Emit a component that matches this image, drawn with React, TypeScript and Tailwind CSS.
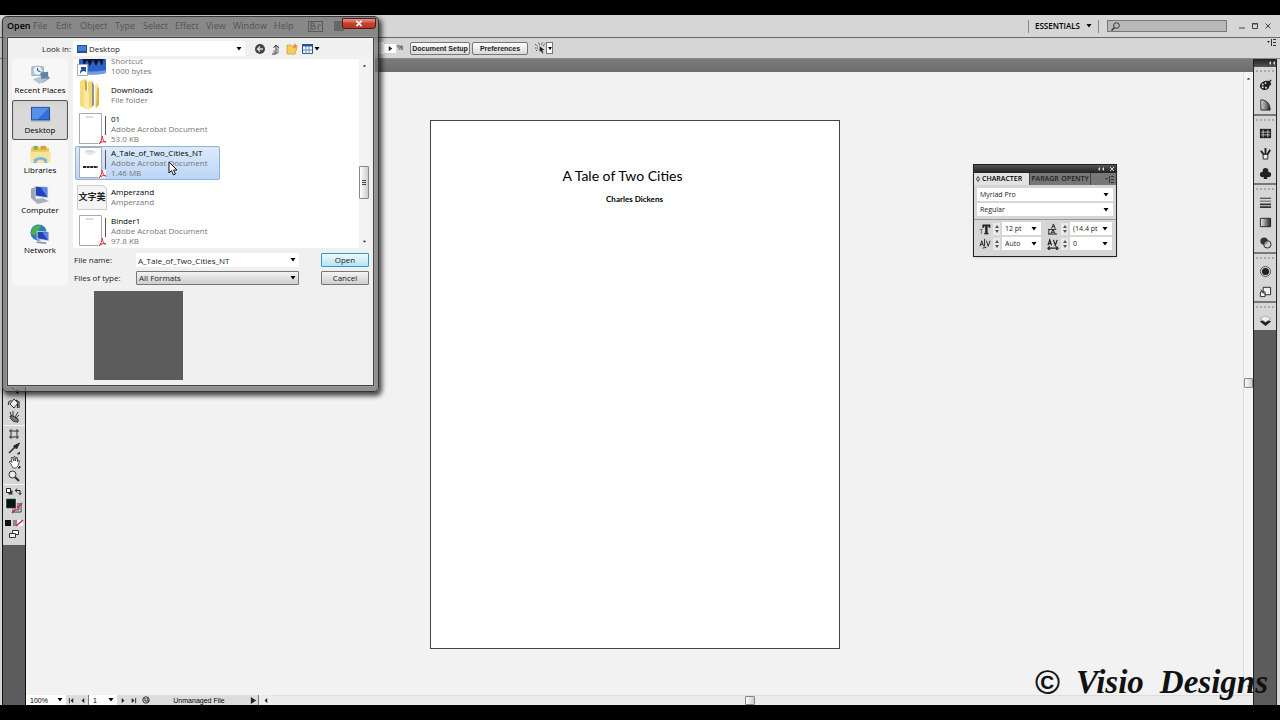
import type { ReactNode } from 'react'
import clsx from 'clsx'

const menus = [
  { label: 'File', width: 'w-[23px]' },
  { label: 'Edit', width: 'w-[24px]' },
  { label: 'Object', width: 'w-[35px]' },
  { label: 'Type', width: 'w-[28px]' },
  { label: 'Select', width: 'w-[32px]' },
  { label: 'Effect', width: 'w-[31px]' },
  { label: 'View', width: 'w-[27px]' },
  { label: 'Window', width: 'w-[41px]' },
  { label: 'Help', width: 'w-[30px]' },
]

/* ---------- small glyphs ---------- */

function Caret({ className }: { className?: string }) {
  return (
    <svg viewBox="0 0 6 4" className={clsx('pointer-events-none h-[4px] w-[6px] shrink-0 fill-black', className)}>
      <path d="M.5 0h5L3 3.500z" />
    </svg>
  )
}

function Arrow({ d, label, className }: { d: string; label: string; className?: string }) {
  return (
    <button type="button" aria-label={label} className={clsx('flex h-[9px] shrink-0 items-center justify-center', className)}>
      <svg viewBox="0 0 8 8" className="h-[7px] w-[7px] fill-[#222]">
        <path d={d} />
      </svg>
    </button>
  )
}

function PanelMenu({ className }: { className?: string }) {
  return (
    <svg viewBox="0 0 9 7" className={clsx('h-[7px] w-[9px]', className)} fill="#333">
      <path d="M0 2h3L1.500 4zM4 0h1v7H4zM6 0h3v1H6zM6 3h3v1H6zM6 6h3v1H6z" />
    </svg>
  )
}

/* ---------- left tools ---------- */

function Tool({ label, children }: { label: string; children: ReactNode }) {
  return (
    <button type="button" aria-label={label} className="flex h-[14px] w-full shrink-0 items-center justify-center">
      <svg viewBox="0 0 14 14" className="h-[14px] w-[14px]" fill="none" stroke="#333" strokeWidth="1">
        {children}
      </svg>
    </button>
  )
}

function Toolbar() {
  return (
    <aside className="flex w-[24px] shrink-0 flex-col border-x border-[#111] bg-[#5c5c5c]">
      <div className="flex flex-col bg-[#d6d6d6] pt-[323px] pb-[3px]">
        <Tool label="Blend">
          <path d="M3 3l4 5M8 9l3 3V8z" fill="#333" />
        </Tool>
        <Tool label="Live Paint Bucket">
          <path d="M3 8l4-5 4 4-4 5z" fill="#eee" />
          <path d="M1.500 9c-.5-3 .5-4 3-4.500M9 4l3 2v6M10.500 8v4" strokeWidth="1.200" />
        </Tool>
        <Tool label="Symbol Sprayer">
          <path d="M3 2l2 5M6 1v6M11 2L8 7M12 5L9 8" />
          <path d="M3 6c1 5 4 6 8 6V9L6 6z" fill="#777" />
        </Tool>
        <div className="my-[1px] h-[1px] bg-[#f5f5f5]" />
        <Tool label="Artboard">
          <path d="M4 2v10M10 2v10M2 4h10M2 10h10" />
        </Tool>
        <Tool label="Eyedropper">
          <path d="M2 12l6-6" strokeWidth="1.600" />
          <path d="M6.500 5l3 3 3-6z" fill="#222" />
          <path d="M12.500 11v2h-2z" fill="#222" />
        </Tool>
        <Tool label="Hand">
          <path d="M4 9L2 7l1-1 2 1.500L4 3l1-1 2 4V1.500h1L8.500 6l1-4 1 1v4l1-2 1 1-1.500 5-2 2H6z" fill="#fff" strokeWidth=".8" />
          <path d="M13 11v2h-2z" fill="#222" />
        </Tool>
        <Tool label="Zoom">
          <circle cx="5.500" cy="5.500" r="3.500" fill="#eee" />
          <path d="M8 8l4 4" strokeWidth="2.200" />
        </Tool>
        <div className="mt-[1px] h-[1px] bg-[#f5f5f5]" />
        <div className="flex h-[12px] items-center justify-between px-[3px]">
          <svg viewBox="0 0 7 7" className="h-[7px] w-[7px]">
            <path d="M2.500 2.500h4v4h-4z" fill="#333" />
            <path d="M.5.5h4v4h-4z" fill="#fff" stroke="#222" />
          </svg>
          <svg viewBox="0 0 7 7" className="h-[7px] w-[7px]" fill="none" stroke="#222">
            <path d="M0 2.500h5v4M2 .5L.5 2.500 2 4.500M3.500 5L5 6.500 6.500 5" />
          </svg>
        </div>
        <svg viewBox="0 0 22 19" className="h-[19px] w-[22px] shrink-0">
          <path d="M10 7h8v8h-8z" fill="#fff" stroke="#333" />
          <path d="M12 9h4v4h-4z" fill="#d6d6d6" stroke="#333" />
          <path d="M9 16L19 6" stroke="#d22040" strokeWidth="1.500" />
          <path d="M3.500 2h9v9h-9z" fill="#111" stroke="#1d5550" />
          <path d="M2.500 1h11v11h-11z" fill="none" stroke="#eee" strokeWidth=".6" />
        </svg>
        <svg viewBox="0 0 22 12" className="h-[12px] w-[22px] shrink-0">
          <path d="M2 4h6v6H2z" fill="#111" />
          <path d="M10 4h4v6h-4z" fill="#888" />
          <path d="M14 4h6v6h-6z" fill="#fff" />
          <path d="M13 10l7-6" stroke="#d22040" strokeWidth="1.500" />
        </svg>
        <Tool label="Screen Mode">
          <path d="M5.500 2.500h6v4h-6z" fill="#fff" />
          <path d="M2.500 5.500h6v4h-6z" fill="#eee" />
        </Tool>
      </div>
    </aside>
  )
}

/* ---------- right dock ---------- */

const dock: { label: string; art: ReactNode }[][] = [
  [
    {
      label: 'Color',
      art: (
        <>
          <path d="M1 9c0-4 4-6 8-6 3 0 4 2 4 4 0 1-2 1-2 2 0 3-3 4-5 4-3 0-5-2-5-4z" fill="#222" />
          <g fill="#eee">
            <circle cx="4" cy="7" r="1" />
            <circle cx="7" cy="5.500" r="1" />
            <circle cx="4" cy="10" r="1" />
            <circle cx="7.500" cy="10.500" r="1" />
          </g>
          <path d="M8 8l5-6" stroke="#222" strokeWidth="1.500" />
        </>
      ),
    },
    {
      label: 'Color Guide',
      art: (
        <>
          <path d="M2 2c6 0 10 4 10 11H2z" fill="url(#fade)" stroke="#222" />
          <path d="M2 13L6 3M2 13l9-6" stroke="#777" strokeWidth=".6" />
        </>
      ),
    },
  ],
  [
    {
      label: 'Swatches',
      art: (
        <>
          <path d="M1 2h12v10H1z" fill="#222" />
          <path d="M4.500 3v8M9.500 3v8M2 5.500h10M2 8.500h10" stroke="#ddd" strokeWidth=".8" />
        </>
      ),
    },
    {
      label: 'Brushes',
      art: (
        <g stroke="#222" fill="#eee">
          <path d="M4.500 8h5v5h-5z" />
          <path d="M5 8L2 4M7 8V1M9 8l3-5" strokeWidth="2" />
        </g>
      ),
    },
    {
      label: 'Symbols',
      art: (
        <g fill="#222">
          <circle cx="7" cy="4" r="3" />
          <circle cx="4" cy="8" r="3" />
          <circle cx="10" cy="8" r="3" />
          <path d="M6 7h2l1 6H5z" />
        </g>
      ),
    },
  ],
  [
    { label: 'Stroke', art: <path d="M1 2h12v1H1zM1 5h12v1H1zM1 8h12v2H1zM1 11h12v2H1z" fill="#333" /> },
    { label: 'Gradient', art: <path d="M1.500 2.500h11v9h-11z" fill="url(#fade)" stroke="#222" /> },
    {
      label: 'Transparency',
      art: (
        <>
          <circle cx="5.500" cy="5.500" r="4" fill="#333" />
          <circle cx="9" cy="9" r="4" fill="#ccc" fillOpacity=".6" stroke="#222" />
        </>
      ),
    },
  ],
  [
    {
      label: 'Appearance',
      art: (
        <>
          <circle cx="7" cy="7" r="5.500" fill="#ccc" stroke="#555" />
          <circle cx="7" cy="7" r="3.800" fill="#222" />
        </>
      ),
    },
    {
      label: 'Graphic Styles',
      art: (
        <>
          <path d="M4.500 2.500h8v8h-8z" fill="#eee" stroke="#222" />
          <path d="M1.500 7.500h5v5h-5z" fill="#fff" stroke="#222" />
          <path d="M2 5l4 5" stroke="#222" />
        </>
      ),
    },
  ],
  [
    {
      label: 'Layers',
      art: (
        <>
          <path d="M1 8l6-3 6 3-6 5z" fill="#222" />
          <path d="M1 5l6-3 6 3-6 4z" fill="#eee" stroke="#777" strokeWidth=".5" />
        </>
      ),
    },
  ],
]

function Dock() {
  return (
    <aside className="flex w-[24px] shrink-0 flex-col border-x border-[#222] bg-[#5c5c5c]">
      <div className="flex h-[8px] shrink-0 items-center justify-end bg-gradient-to-b from-[#222] to-[#555] pr-[1px]">
        <svg viewBox="0 0 6 4" className="h-[4px] w-[6px] fill-[#ddd]">
          <path d="M2 0v4L0 2zM6 0v4L4 2z" />
        </svg>
      </div>
      {dock.map((group, i) => (
        <div key={i} className="shrink-0 border-b-2 border-[#777] bg-[#d6d6d6] last:border-b-0">
          <div className="flex h-[7px] items-center justify-center">
            <span className="w-[18px] border-t-2 border-dotted border-[#aaa]" />
          </div>
          {group.map(({ label, art }) => (
            <button key={label} type="button" aria-label={label} className="flex h-[20px] w-full items-center justify-center">
              <svg viewBox="0 0 14 14" className="h-[13px] w-[13px]" fill="none">
                {art}
              </svg>
            </button>
          ))}
        </div>
      ))}
    </aside>
  )
}

/* ---------- top bars ---------- */

function MenuBar() {
  return (
    <header className="flex h-[23px] shrink-0 items-center border-b border-[#666] bg-[#d6d6d6] pr-[8px] pl-[33px]">
      <nav className="flex font-['Open_Sans','Noto_Sans',sans-serif] text-[9px] leading-[12px] text-black">
        {menus.map(({ label, width }) => (
          <button key={label} type="button" className={clsx('text-left', width)}>
            {label}
          </button>
        ))}
      </nav>
      <div className="ml-[4px] flex h-[11px] w-[15px] items-center justify-center border border-[#222]">
        <svg viewBox="0 0 12 8" className="h-[8px] w-[12px]" fill="none" stroke="#222">
          <path d="M1 0v8M1 1h3v3H1M1 4h4v3H1M8 8V3h3" />
        </svg>
      </div>
      <div className="ml-[11px] h-[10px] w-[10px] bg-[#555]" />
      <div className="ml-auto flex items-center">
        <button
          type="button"
          className="flex h-[13px] items-center gap-[6px] border-x border-[#888] px-[6px] font-['Open_Sans','Noto_Sans',sans-serif] text-[8px] font-semibold text-black"
        >
          ESSENTIALS
          <Caret />
        </button>
        <label className="ml-[8px] flex h-[12px] w-[120px] items-center border border-[#777] bg-[#b8b8b8] px-[3px]">
          <svg viewBox="0 0 9 9" className="h-[9px] w-[9px] shrink-0" fill="none" stroke="#333">
            <circle cx="5.500" cy="3.500" r="2.800" />
            <path d="M3.500 5.500L.5 8.500" strokeWidth="1.400" />
          </svg>
          <input aria-label="Search" className="min-w-0 flex-1 bg-transparent text-[8px] outline-none" />
        </label>
        <div className="ml-[11px] flex gap-[5px]">
          {[
            { name: 'Minimize', d: 'M1 6h6' },
            { name: 'Restore', d: 'M1.500 1.500h5v5h-5zM1 2h6' },
            { name: 'Close', d: 'M1.500 1.500l5 5M6.500 1.500l-5 5' },
          ].map(({ name, d }) => (
            <button key={name} type="button" aria-label={name}>
              <svg viewBox="0 0 8 8" className="h-[8px] w-[8px]" fill="none" stroke="#444">
                <path d={d} />
              </svg>
            </button>
          ))}
        </div>
      </div>
    </header>
  )
}

function ControlBar() {
  const button =
    'h-[13px] rounded-[2px] border border-[#777] bg-gradient-to-b from-white to-[#d8d8d8] text-[7px] font-bold leading-[11px] text-[#222]'
  return (
    <div className="flex h-[21px] shrink-0 items-center border-b border-[#888] bg-[#d6d6d6] pr-[4px] pl-[340px] font-['Liberation_Sans',Arial,sans-serif] text-[7px] text-black">
      <input aria-label="Opacity" defaultValue="100" className="h-[12px] w-[44px] bg-white px-[3px]" />
      <Arrow d="M2 1v6l4-3z" label="Opacity slider" className="w-[12px] bg-white" />
      <span className="ml-[1px] w-[13px]">%</span>
      <button type="button" className={clsx(button, 'w-[60px]')}>
        Document Setup
      </button>
      <button type="button" className={clsx(button, 'ml-[2px] w-[56px]')}>
        Preferences
      </button>
      <svg viewBox="0 0 12 12" className="ml-[7px] h-[12px] w-[11px]" fill="none" stroke="#444">
        <path d="M0 2l3 2M0 6h3M4 0l1 3M8 0L7 3M11 1L9 4M1 9l2-1" strokeDasharray="1.500 .5" />
        <path d="M5 4l5 4-2 .5 1 3-1 .5-1.500-3L5 10z" fill="#222" stroke="none" />
      </svg>
      <button type="button" aria-label="Selection options" className="flex h-[12px] w-[7px] items-center justify-center border border-[#777] bg-white">
        <svg viewBox="0 0 4 3" className="h-[3px] w-[4px]">
          <path d="M0 0h4L2 3z" />
        </svg>
      </button>
      <PanelMenu className="mb-[12px] ml-auto" />
    </div>
  )
}

function StatusBar() {
  return (
    <footer className="flex h-[10px] shrink-0 items-center bg-[#ececec] font-['Liberation_Sans',Arial,sans-serif] text-[7px] leading-[9px] text-black">
      <div className="relative flex h-full w-[40px] shrink-0 items-center bg-white">
        <input aria-label="Zoom" defaultValue="100%" className="h-[9px] w-full pl-[4px]" />
        <Caret className="absolute right-[3px]" />
      </div>
      <div className="flex h-full shrink-0 items-center bg-[#dcdcdc]">
        <Arrow d="M1 1h1v6H1zM6 1v6L3 4z" label="First" className="w-[10px]" />
        <Arrow d="M6 1v6L3 4z" label="Previous" className="w-[12px]" />
      </div>
      <div className="relative flex h-full w-[29px] shrink-0 items-center border-l border-[#777] bg-white">
        <input aria-label="Artboard" defaultValue="1" className="h-[9px] w-full pl-[4px]" />
        <Caret className="absolute right-[3px]" />
      </div>
      <div className="flex h-full w-[142px] shrink-0 items-center border-r border-[#777] bg-[#dcdcdc]">
        <Arrow d="M2 1v6l3-3z" label="Next" className="w-[12px]" />
        <Arrow d="M2 1v6l3-3zM6 1h1v6H6z" label="Last" className="w-[9px]" />
        <svg viewBox="0 0 8 8" className="ml-[4px] h-[8px] w-[8px]" fill="none" stroke="#333">
          <circle cx="4" cy="4" r="3.200" />
          <path d="M3 2v3h3M5 2l2 4" />
        </svg>
        <span className="flex-1 text-center">Unmanaged File</span>
        <Arrow d="M1 0v8l6-4z" label="Status menu" className="w-[10px]" />
      </div>
      <Arrow d="M6 1v6L3 4z" label="Scroll left" className="w-[12px]" />
      <div className="flex h-full flex-1 items-center justify-center border-t border-[#ddd] pr-[24px]">
        <div className="h-[9px] w-[10px] rounded-[1px] border border-[#888] bg-gradient-to-r from-white to-[#ccc]" />
      </div>
    </footer>
  )
}

/* ---------- character panel ---------- */

function PanelSelect({ label, value }: { label: string; value: string }) {
  return (
    <div className="relative flex items-center">
      <select aria-label={label} className="h-[13px] w-full appearance-none bg-white pl-[3px] text-[7px] leading-[13px] text-[#222]">
        <option>{value}</option>
      </select>
      <Caret className="absolute right-[4px]" />
    </div>
  )
}

function Metric({ label, value, width, children }: { label: string; value: string; width: string; children: ReactNode }) {
  return (
    <div className="flex h-[13px] items-center">
      <svg viewBox="0 0 13 13" className="h-[12px] w-[12px] shrink-0">
        {children}
      </svg>
      <div className="mx-[2px] flex h-[12px] w-[7px] flex-col items-center justify-center gap-[2px] bg-[#eaeaea]">
        <button type="button" aria-label={label + ' up'}>
          <svg viewBox="0 0 4 3" className="h-[3px] w-[4px] fill-[#555]">
            <path d="M0 3h4L2 0z" />
          </svg>
        </button>
        <button type="button" aria-label={label + ' down'}>
          <svg viewBox="0 0 4 3" className="h-[3px] w-[4px] fill-[#555]">
            <path d="M0 0h4L2 3z" />
          </svg>
        </button>
      </div>
      <div className={width}>
        <PanelSelect label={label} value={value} />
      </div>
    </div>
  )
}

function CharacterPanel() {
  return (
    <section className="absolute top-[164px] right-[163px] w-[144px] border border-[#222] bg-[#d6d6d6] font-['Open_Sans','Noto_Sans',sans-serif] text-[7px] shadow-sm">
      <div className="flex h-[8px] items-center justify-end gap-[6px] bg-gradient-to-b from-[#555] to-[#222] pr-[2px]">
        <svg viewBox="0 0 6 4" className="h-[4px] w-[6px] fill-[#ddd]">
          <path d="M2 0v4L0 2zM6 0v4L4 2z" />
        </svg>
        <svg viewBox="0 0 4 4" className="h-[4px] w-[4px]" stroke="#ddd">
          <path d="M0 0l4 4M4 0L0 4" />
        </svg>
      </div>
      <div className="flex h-[12px] items-stretch bg-[#777] text-[#222]">
        <button type="button" className="flex w-[55px] items-center gap-[2px] bg-[#e2e2e2] pl-[2px] font-semibold text-black">
          <svg viewBox="0 0 4 6" className="h-[6px] w-[4px]" fill="none" stroke="#222" strokeWidth=".8">
            <path d="M2 .5L3.500 3 2 5.500.5 3z" />
          </svg>
          CHARACTER
        </button>
        <button type="button" className="w-[31px] border-l border-[#444] text-center font-semibold">
          PARAGR
        </button>
        <button type="button" className="w-[31px] border-r border-[#444] text-center font-semibold">
          OPENTY
        </button>
        <PanelMenu className="mt-[3px] mr-[2px] ml-auto" />
      </div>
      <div className="flex flex-col gap-[2px] px-[3px] pt-[3px] pb-[3px]">
        <PanelSelect label="Font family" value="Myriad Pro" />
        <PanelSelect label="Font style" value="Regular" />
      </div>
      <div className="flex flex-wrap justify-between gap-y-[2px] border-t border-[#999] pt-[2px] pr-[4px] pb-[6px] pl-[5px]">
        <Metric label="Font size" value="12 pt" width="w-[39px]">
          <path d="M4 2h8v3h-1l-1-2H9v8h1v1H6v-1h1V3H6L5 5H4zM1 7h3M2.500 7v5" stroke="#222" strokeWidth=".6" fill="#222" />
        </Metric>
        <Metric label="Leading" value="(14.4 pt" width="w-[42px]">
          <path d="M5 6l2-5 2 5M6 4h2M4 12l2.500-5L9 12M5 10h3M2 7v5M1 7h9M1 12h10" stroke="#222" fill="none" />
        </Metric>
        <Metric label="Kerning" value="Auto" width="w-[39px]">
          <path d="M1 9l2-6 2 6M2 7h2M8 3l2 6 2-6M6 1v8M4 11l4-1" stroke="#222" fill="none" />
        </Metric>
        <Metric label="Tracking" value="0" width="w-[42px]">
          <path d="M1 8l2-6 2 6M2 6h2M7 2l2 6 2-6M1 11h11M3 9l-2 2 2 2M10 9l2 2-2 2" stroke="#222" fill="none" strokeWidth="1.300" />
        </Metric>
      </div>
    </section>
  )
}

/* ---------- open dialog ---------- */

function PdfIcon({ lines }: { lines?: boolean }) {
  return (
    <svg viewBox="0 0 30 32" className="h-[32px] w-[30px]">
      <path d="M2.500.5h22v30h-22z" fill="#fff" stroke="#aaa" />
      <path d="M28.500 3v19" stroke="#555" />
      <path d="M9 4h7" stroke="#bbb" />
      {lines && (
        <>
          <path d="M8 5h11M10 7h6" stroke="#ccc" />
          <path d="M6 20h15" stroke="#223" strokeWidth="2" strokeDasharray="3 .6" />
        </>
      )}
      <path d="M21 23h8v8h-8z" fill="#fff" />
      <path d="M22 31c2-2 3-5 3-8 1 4 2 6 4 6-3-1-5 0-7 2z" fill="none" stroke="#c8202c" />
    </svg>
  )
}

const files: { name: string; detail: string; size?: string; selected?: boolean; icon: ReactNode }[] = [
  {
    name: 'CW',
    detail: 'Shortcut',
    size: '1000 bytes',
    icon: (
      <svg viewBox="0 0 30 32" className="h-[32px] w-[30px]">
        <path d="M2 4h27v24q-13 3-27 0z" fill="#2f62c9" />
        <path d="M2 25q13 3 27 0v3q-13 3-27 0z" fill="#6f9bea" />
        <path d="M5 12h22l-2 9-3-6-3 6-3-6-3 6-3-6-3 6z" fill="#0c1630" />
        <path d="M.5 19.500h10v11H.5z" fill="#fff" stroke="#aaa" />
        <path d="M3 29c0-4 1-5 3-5h-2v-2h5v5l-2-1c-2 0-3 1-4 3z" fill="#1b4aa0" />
      </svg>
    ),
  },
  {
    name: 'Downloads',
    detail: 'File folder',
    icon: (
      <svg viewBox="0 0 30 32" className="h-[32px] w-[30px]">
        <path d="M3 2l5-2v29l-5-2z" fill="#f5dc7e" />
        <path d="M8 0l2 3v26l-2 1z" fill="#c9a640" />
        <path d="M11 3l4-1v26l-4 2z" fill="#f3d66c" />
        <path d="M15 2l2 4v20l-2 2z" fill="#8d9196" />
        <path d="M18 6l3-2v22l-3 3z" fill="#f8e69a" />
        <path d="M7 10l5 4v17l-5-2z" fill="#fbeaa5" />
        <path d="M20 9l2-1v18l-3 3z" fill="#dcb84c" />
      </svg>
    ),
  },
  { name: '01', detail: 'Adobe Acrobat Document', size: '53.0 KB', icon: <PdfIcon /> },
  { name: 'A_Tale_of_Two_Cities_NT', detail: 'Adobe Acrobat Document', size: '1.46 MB', selected: true, icon: <PdfIcon lines /> },
  {
    name: 'Amperzand',
    detail: 'Amperzand',
    icon: (
      <div className="flex h-[25px] w-[30px] items-center justify-center rounded-tr-[5px] border border-[#ccc] bg-[#f4f4f4] font-['Noto_Sans_CJK_SC',sans-serif] text-[9px] font-bold text-[#222]">
        文字美
      </div>
    ),
  },
  { name: 'Binder1', detail: 'Adobe Acrobat Document', size: '97.8 KB', icon: <PdfIcon /> },
]

const places: { name: string; selected?: boolean; art: ReactNode }[] = [
  {
    name: 'Recent Places',
    art: (
      <>
        <path d="M3 3h12v9H3z" fill="#c8dcec" stroke="#8aa" />
        <circle cx="9" cy="7" r="5" fill="#e8f2fa" stroke="#9ab" />
        <path d="M9 4v3l3 1" stroke="#345" fill="none" />
        <path d="M11 14l8-3 3 4-8 5z" fill="#8a9aa8" />
        <path d="M4 16l8-3 7 3-8 5z" fill="#b4c6d4" />
        <path d="M12 9l8-1v6l-7 2z" fill="#5c84aa" />
      </>
    ),
  },
  {
    name: 'Desktop',
    selected: true,
    art: (
      <>
        <path d="M2 3h20v15H2z" fill="#2a4f86" />
        <path d="M3 4h18v12H3z" fill="#3470d8" />
        <path d="M3 4h18L9 16H3z" fill="#5590ea" />
        <path d="M2 17h20v1H2z" fill="#8fb0c8" />
      </>
    ),
  },
  {
    name: 'Libraries',
    art: (
      <>
        <path d="M2 4l3-2h5l1 2h10v15H2z" fill="#e8c95c" />
        <path d="M5 2h4v4H5z" fill="#7fae5a" />
        <path d="M12 2h6v4h-6z" fill="#d9a03c" />
        <path d="M1 8h22l-1 12H2z" fill="#f7e499" />
        <path d="M5 20v-4q7-5 14 0v4h-3v-2q-4-3-8 0v2z" fill="#79b7de" />
      </>
    ),
  },
  {
    name: 'Computer',
    art: (
      <>
        <path d="M2 5l5-2v14l-5-2z" fill="#9aa6b2" />
        <path d="M6 2l14 1v12L6 13z" fill="#ccd4dc" />
        <path d="M7 3l12 1v10L7 12z" fill="#2244b8" />
        <path d="M12 3l7 1v10z" fill="#5a86e8" />
        <path d="M3 16l12-1 6 3-12 3z" fill="#a8b0ba" />
      </>
    ),
  },
  {
    name: 'Network',
    art: (
      <>
        <circle cx="10" cy="9" r="8.500" fill="#2a7fb8" />
        <path d="M4 4q5-4 9-2l-3 4-4 6-4-2z" fill="#4db04a" />
        <path d="M8 7l13 1v10L8 16z" fill="#ccd4dc" />
        <path d="M9 8l11 1v8L9 15z" fill="#2244b8" />
        <path d="M14 9l6 .5V17z" fill="#5a86e8" />
        <path d="M8 18l10 1v2l-10-1z" fill="#8a929c" />
      </>
    ),
  },
]

function MiniDesktop() {
  return (
    <svg viewBox="0 0 10 8" className="pointer-events-none absolute left-[4px] h-[8px] w-[10px]">
      <path d="M0 0h10v8H0z" fill="#2a4f86" />
      <path d="M1 1h8v5H1z" fill="#3f7fe0" />
    </svg>
  )
}

function OpenDialog() {
  const push = 'flex h-[14px] w-[48px] items-center justify-center rounded-[1px] border'
  return (
    <div
      role="dialog"
      aria-label="Open"
      className="absolute top-[16px] left-[2px] w-[377px] rounded-[5px] border border-[#333] bg-[#6e6e6e]/75 px-[4px] pb-[5px] font-['Open_Sans','Noto_Sans',sans-serif] text-[8px] leading-[10px] text-[#222] shadow-[2px_3px_5px_1px_rgba(0,0,0,0.7)]"
    >
      <div className="flex h-[20px] items-start justify-between">
        <h1 className="mt-[4px] text-[9px] font-semibold text-black">Open</h1>
        <button
          type="button"
          aria-label="Close"
          className="-mr-[2px] mt-px flex h-[11px] w-[34px] items-center justify-center rounded-b-[3px] border border-[#5a1a14] bg-gradient-to-b from-[#e09a90] via-[#c8402e] to-[#b83424]"
        >
          <svg viewBox="0 0 8 8" className="h-[7px] w-[8px]" stroke="#fff" strokeWidth="2">
            <path d="M1 1l6 6M7 1L1 7" />
          </svg>
        </button>
      </div>

      <div className="border border-[#444] bg-[#f0f0f0] pb-[5px] outline outline-1 outline-[#999]">
        <div className="flex h-[21px] items-center pl-[34px]">
          <label htmlFor="look-in" className="w-[31px]">
            Look in:
          </label>
          <div className="relative flex w-[172px] items-center">
            <MiniDesktop />
            <select id="look-in" className="h-[15px] w-full appearance-none bg-white pl-[16px]">
              <option>Desktop</option>
            </select>
            <Caret className="absolute right-[3px]" />
          </div>
          <div className="ml-[9px] flex items-center gap-[4px]">
            <button type="button" aria-label="Back">
              <svg viewBox="0 0 12 12" className="h-[12px] w-[12px]">
                <circle cx="6" cy="6" r="5" fill="#444" />
                <path d="M9 6H4M6 3.500L3.500 6 6 8.500" stroke="#ddd" fill="none" strokeWidth="1.300" />
              </svg>
            </button>
            <button type="button" aria-label="Up one level">
              <svg viewBox="0 0 12 12" className="h-[12px] w-[12px]" fill="none" stroke="#333">
                <path d="M2 11h4V3M3.500 5L6 2l3 3" />
                <path d="M8 3v7H4V7" stroke="#777" />
              </svg>
            </button>
            <button type="button" aria-label="New folder">
              <svg viewBox="0 0 12 12" className="h-[12px] w-[12px]">
                <path d="M1 2h4l1 2h5l-2 7H1z" fill="#f4cf5a" stroke="#c89a2c" strokeWidth=".7" />
                <path d="M9 0l1 2 2 1-2 1-1 2-1-2-2-1 2-1z" fill="#f08a3c" />
              </svg>
            </button>
            <button type="button" aria-label="View" className="flex items-center gap-px">
              <svg viewBox="0 0 11 10" className="h-[10px] w-[11px]">
                <path d="M.5.5h10v9H.5z" fill="#fff" stroke="#26548f" />
                <path d="M0 0h11v2.500H0z" fill="#26548f" />
                <path d="M4 2v8M7 2v8M1 6h9" stroke="#5a8ac4" />
              </svg>
              <Caret />
            </button>
          </div>
        </div>

        <div className="flex">
          <ul className="ml-[4px] w-[56px] shrink-0 bg-[#f7f7f7] pt-px">
            {places.map(({ name, selected, art }) => (
              <li key={name}>
                <button
                  type="button"
                  className={clsx(
                    'flex h-[40px] w-full flex-col items-center border pt-[3px] whitespace-nowrap text-black',
                    selected ? 'rounded-[2px] border-[#555] bg-[#d9d9d9] shadow-inner' : 'border-transparent',
                  )}
                >
                  <svg viewBox="0 0 24 22" className="h-[21px] w-[23px]">
                    {art}
                  </svg>
                  {name}
                </button>
              </li>
            ))}
          </ul>

          <div className="ml-[5px] flex-1 pr-[4px]">
            <div className="flex h-[189px] bg-white">
              {/* list is scrolled part way into its first row */}
              <ul className="flex flex-1 flex-col overflow-hidden pl-[2px]">
                {files.map(({ name, detail, size, selected, icon }) => (
                  <li
                    key={name}
                    className={clsx(
                      'flex h-[34px] w-[145px] shrink-0 items-center gap-[4px] border pl-[1px] whitespace-nowrap first:-mt-[15px]',
                      selected ? 'rounded-[2px] border-[#8fb4dc] bg-gradient-to-b from-[#dceafb] to-[#bcd6f5]' : 'border-transparent',
                    )}
                  >
                    {icon}
                    <div className="text-[#777]">
                      <p className="text-black">{name}</p>
                      <p>{detail}</p>
                      {size && <p>{size}</p>}
                    </div>
                  </li>
                ))}
              </ul>
              <div className="flex w-[10px] flex-col items-center bg-[#f4f4f4] py-[2px]">
                <Arrow d="M2 5h4L4 3z" label="Scroll up" className="w-[8px]" />
                <div className="mt-[96px] mb-auto flex h-[33px] w-[10px] flex-col items-center justify-center gap-px rounded-[1px] border border-[#888] bg-gradient-to-r from-white to-[#ccc]">
                  <span className="h-px w-[4px] bg-[#444]" />
                  <span className="h-px w-[4px] bg-[#444]" />
                  <span className="h-px w-[4px] bg-[#444]" />
                </div>
                <Arrow d="M2 3h4L4 5z" label="Scroll down" className="w-[8px]" />
              </div>
            </div>

            <div className="mt-[5px] flex items-center">
              <label htmlFor="file-name" className="w-[63px] pl-px">
                File name:
              </label>
              <div className="relative flex w-[163px] items-center">
                <input id="file-name" defaultValue="A_Tale_of_Two_Cities_NT" className="h-[14px] w-full bg-white pl-[2px]" />
                <Caret className="absolute right-[3px]" />
              </div>
              <button type="button" className={clsx(push, 'ml-auto border-[#2a9ccc] bg-gradient-to-b from-[#f0fafe] to-[#b8e2f4]')}>
                Open
              </button>
            </div>
            <div className="mt-[4px] flex items-center">
              <label htmlFor="file-type" className="w-[63px] pl-px">
                Files of type:
              </label>
              <div className="relative flex w-[163px] items-center">
                <select
                  id="file-type"
                  className="h-[14px] w-full appearance-none rounded-[1px] border border-[#777] bg-gradient-to-b from-[#f2f2f2] to-[#cfcfcf] pl-[2px]"
                >
                  <option>All Formats</option>
                </select>
                <Caret className="absolute right-[3px]" />
              </div>
              <button type="button" className={clsx(push, 'ml-auto border-[#777] bg-gradient-to-b from-[#f4f4f4] to-[#cfcfcf]')}>
                Cancel
              </button>
            </div>
          </div>
        </div>
        <div className="mt-[6px] ml-[86px] h-[89px] w-[89px] bg-[#5c5c5c]" />
      </div>
    </div>
  )
}

/* ---------- page ---------- */

export default function App() {
  return (
    <div className="relative flex h-screen flex-col bg-black py-[15px]">
      <svg className="absolute h-0 w-0">
        <defs>
          <linearGradient id="fade">
            <stop offset="0" stopColor="#eee" />
            <stop offset="1" stopColor="#222" />
          </linearGradient>
        </defs>
      </svg>

      <div className="flex min-h-0 flex-1 flex-col overflow-hidden bg-[#d6d6d6]">
        <MenuBar />
        <ControlBar />
        <div className="flex min-h-0 flex-1 pr-[3px] pl-[2px]">
          <Toolbar />
          <main className="flex min-w-0 flex-1 flex-col">
            <div className="h-[13px] shrink-0 bg-gradient-to-b from-[#7c7c7c] to-[#6c6c6c]" />
            <div className="flex min-h-0 flex-1">
              <div className="flex flex-1 justify-center overflow-hidden bg-[#f2f2f2] pt-[48px]">
                <article className="h-[529px] w-[410px] border border-[#444] bg-white pt-[44px] text-center text-black">
                  <h2 className="mr-[24px] font-['Lato','Open_Sans',sans-serif] text-[14px] leading-[22px]">A Tale of Two Cities</h2>
                  <p className="mt-[6px] font-['Lato','Open_Sans',sans-serif] text-[8px] leading-[12px] font-bold">Charles Dickens</p>
                </article>
              </div>
              <div className="flex w-[10px] shrink-0 flex-col items-center justify-between border-l border-[#ddd] bg-[#f4f4f4] pb-[4px]">
                <Arrow d="M2 5h4L4 3z" label="Scroll up" className="mt-[2px] w-[8px]" />
                <div className="h-[10px] w-[9px] rounded-[1px] border border-[#888] bg-gradient-to-r from-white to-[#ccc]" />
                <Arrow d="M2 3h4L4 5z" label="Scroll down" className="w-[8px]" />
              </div>
            </div>
            <StatusBar />
          </main>
          <Dock />
        </div>
      </div>

      <CharacterPanel />
      <OpenDialog />

      <svg viewBox="0 0 10 15" className="pointer-events-none absolute top-[161px] left-[168px] h-[15px] w-[10px]">
        <path d="M1 1v11l2.500-2.500L5.500 14l2-1-2-4H9z" fill="#fff" stroke="#111" />
      </svg>

      <p className="pointer-events-none absolute right-[12px] bottom-[20px] flex items-center gap-[16px] font-['Brush_Script_MT','Liberation_Serif',serif] text-[33px] leading-[36px] font-bold text-[#111] italic">
        <span className="font-['Liberation_Sans',Arial,sans-serif] text-[34px] not-italic">©</span>
        <span>Visio</span>
        <span>Designs</span>
      </p>
    </div>
  )
}
